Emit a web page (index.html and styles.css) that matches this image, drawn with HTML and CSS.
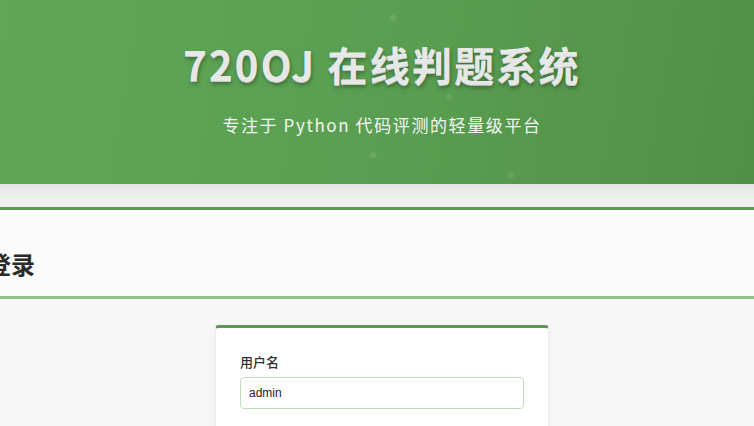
FILE: index.html
```html
<!DOCTYPE html>
<html lang="zh-CN">
<head>
<meta charset="utf-8">
<title>720OJ 在线判题系统</title>
<link rel="stylesheet" href="styles.css">
</head>
<body>
<header class="hero">
  <span class="dot d1"></span><span class="dot d2"></span><span class="dot d3"></span><span class="dot d4"></span>
  <h1 class="hero-title">720OJ 在线判题系统</h1>
  <p class="hero-sub">专注于 Python 代码评测的轻量级平台</p>
</header>
<div class="band"></div>
<section class="page-head">
  <h2 class="page-title">登录</h2>
</section>
<main class="main">
  <form class="card">
    <label class="label" for="u">用户名</label>
    <input class="input" id="u" type="text" value="admin">
  </form>
</main>
</body>
</html>
```
FILE: styles.css
```css
* { box-sizing: border-box; }
html, body { margin: 0; padding: 0; }
body {
  background: #f6f7f6;
  font-family: "Noto Sans CJK SC", "Noto Sans", sans-serif;
  overflow: hidden;
  height: 426px;
}
.hero {
  position: relative;
  height: 184px;
  background: linear-gradient(100deg, #5fa757 0%, #5a9f51 50%, #509046 100%);
  display: flex;
  flex-direction: column;
  align-items: center;
  padding: 33px 0 0 10px;
}
.dot {
  position: absolute;
  width: 6px; height: 6px;
  border-radius: 50%;
  background: rgba(255,255,255,0.12);
  filter: blur(1px);
}
.d1 { left: 390px; top: 15px; }
.d2 { left: 446px; top: 94px; }
.d3 { left: 370px; top: 152px; }
.d4 { left: 508px; top: 172px; }
.hero-title {
  margin: 0;
  font-size: 40px;
  font-weight: 700;
  line-height: 62px;
  color: #e6e8e7;
  letter-spacing: 2.2px;
  text-shadow: 0 1px 0 #c2c6c3, 1px 3px 4px rgba(0,0,0,0.35);
}
.hero-sub {
  margin: 17px 0 0;
  font-size: 17px;
  line-height: 26px;
  letter-spacing: 1.6px;
  color: #f2f5f1;
}
.band {
  height: 23px;
  background: linear-gradient(#e2e3e2, #edefed 50%, #eff1ef);
}
.page-head {
  height: 92px;
  background: #fbfbfb;
  border-top: 3px solid #5b9b52;
  border-bottom: 3px solid #8fc288;
  display: flex;
  align-items: center;
  padding-top: 20px;
}
.page-title {
  margin: 0 0 0 -13px;
  font-size: 24px;
  font-weight: 700;
  color: #2b2b2b;
}
.main {
  display: flex;
  justify-content: center;
  padding: 26px 0 0 10px;
}
.card {
  width: 334px;
  background: #fff;
  border: 1px solid #ececec;
  border-top: 3px solid #5a9a50;
  border-radius: 4px;
  box-shadow: 0 2px 8px rgba(0,0,0,0.04);
  padding: 24px 24px 40px;
  display: flex;
  flex-direction: column;
}
.label {
  font-size: 13px;
  line-height: 20px;
  color: #333;
  font-weight: 500;
  margin-bottom: 5px;
}
.input {
  height: 32px;
  border: 1px solid #c3dcc0;
  border-radius: 4px;
  padding: 0 8px;
  font-family: "Liberation Sans", Arial, sans-serif;
  font-size: 12px;
  color: #222;
  background: #fff;
  outline: none;
}
```
